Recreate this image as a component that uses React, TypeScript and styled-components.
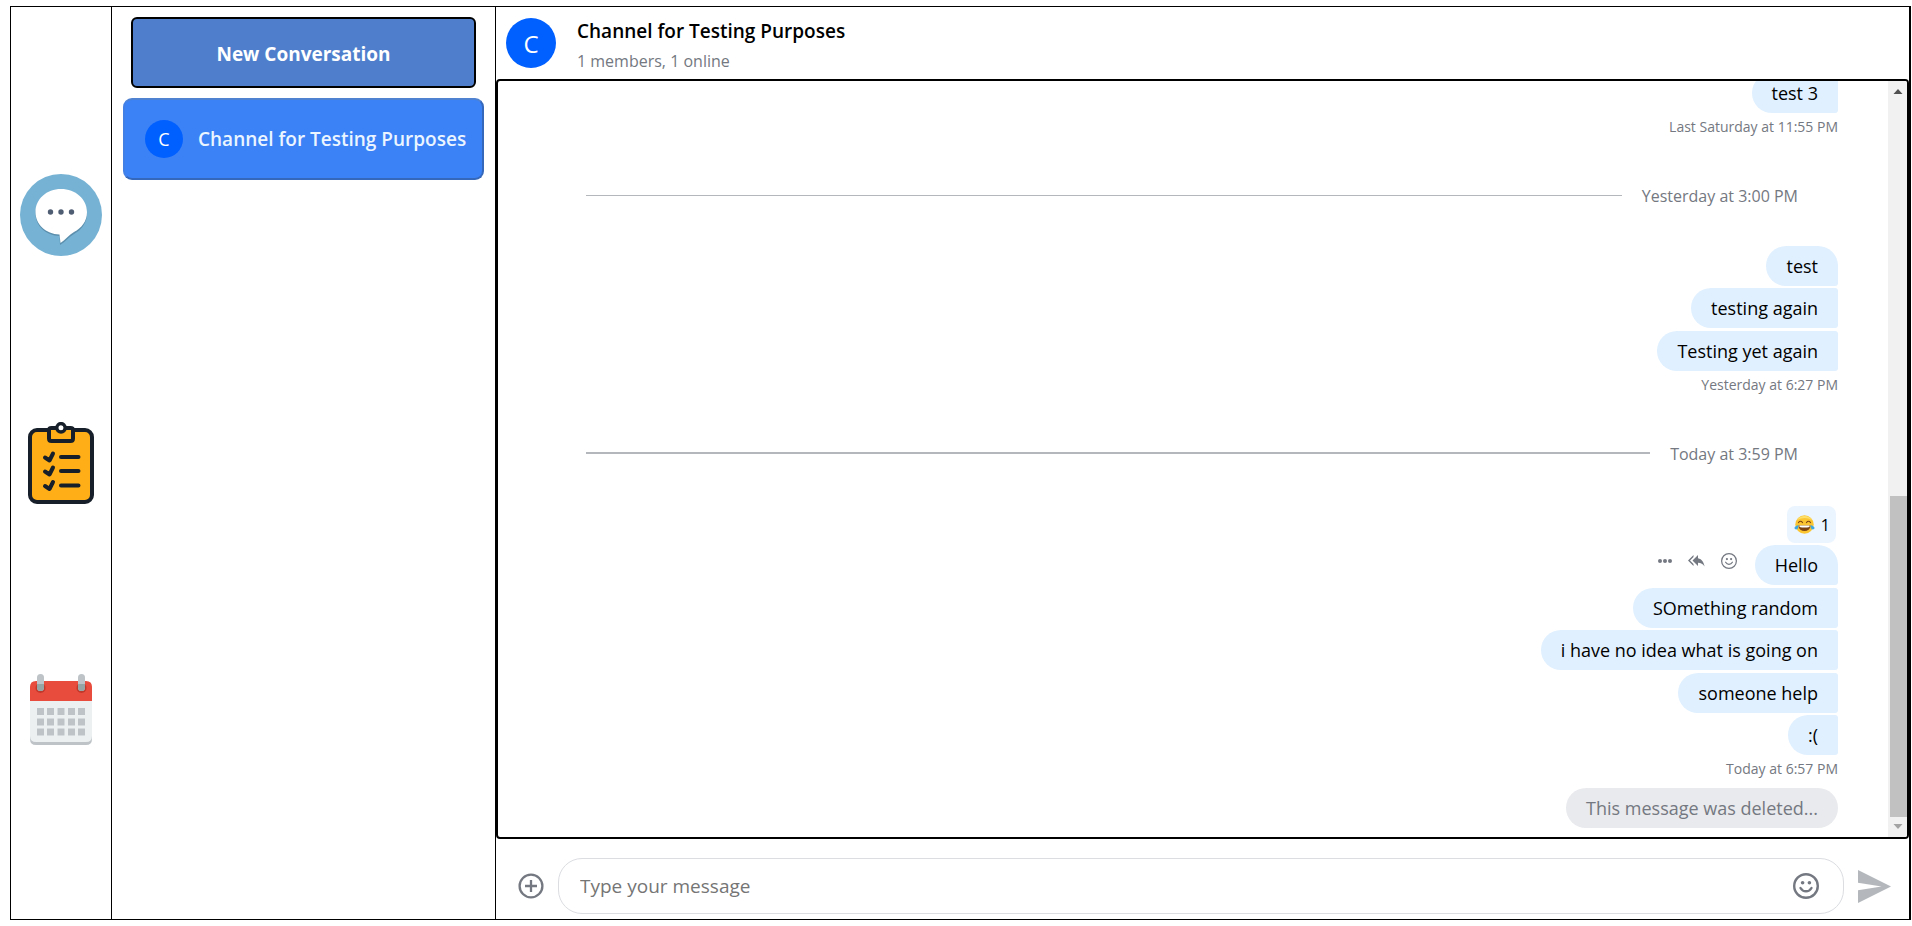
import React from "react";
import styled, { createGlobalStyle } from "styled-components";

const GlobalStyle = createGlobalStyle`
  *, *::before, *::after { box-sizing: border-box; }
  body {
    margin: 0;
    background: #fff;
    color: #000;
    font-family: "Segoe UI", "Open Sans", "Noto Sans", sans-serif;
  }
  button { font: inherit; cursor: pointer; }
`;

const Shell = styled.div`
  display: grid;
  grid-template-columns: 101px 384px minmax(0, 1fr);
  height: calc(100vh - 12px);
  margin: 6px 1px 6px 10px;
  border: 1px solid #000;
  border-right-width: 2px;
`;

const Rail = styled.nav`
  display: flex;
  flex-direction: column;
  align-items: center;
  justify-content: space-evenly;
  border-right: 1px solid #000;
`;

const RailLink = styled.a`
  display: block;
  height: 82px;
`;

const Sidebar = styled.aside`
  display: flex;
  flex-direction: column;
  gap: 10px;
  padding: 10px 11px;
  border-right: 1px solid #000;
`;

const NewConversationButton = styled.button`
  height: 71px;
  margin: 0 8px;
  padding: 2px 0 0;
  border: 2px solid #000;
  border-radius: 6px;
  background: #4f7fcc;
  color: #fff;
  font-size: 19px;
  font-weight: 700;
`;

const ChannelButton = styled.button`
  display: flex;
  align-items: center;
  gap: 15px;
  height: 82px;
  padding: 0 0 0 20px;
  border: 2px solid;
  border-color: #4f82d0 #3568ba #3568ba #4380e6;
  border-radius: 9px;
  background: #3b82f6;
  color: #ebf5ff;
  font-size: 19px;
  font-weight: 600;
  white-space: nowrap;
`;

const Avatar = styled.span<{ $size: number; $text: number }>`
  display: flex;
  flex: none;
  align-items: center;
  justify-content: center;
  width: ${(p) => p.$size}px;
  height: ${(p) => p.$size}px;
  border-radius: 50%;
  background: #005fff;
  color: #fff;
  font-size: ${(p) => p.$text}px;
  font-weight: 400;
`;

const Chat = styled.main`
  display: flex;
  flex-direction: column;
  min-width: 0;
  min-height: 0;
`;

const ChatHeader = styled.header`
  display: flex;
  align-items: center;
  gap: 21px;
  height: 72px;
  padding: 0 10px;
`;

const HeaderText = styled.div`
  padding-top: 6px;
`;

const ChannelTitle = styled.h1`
  margin: 0;
  font-size: 19px;
  line-height: 30px;
  font-weight: 600;
`;

const ChannelInfo = styled.p`
  margin: 0;
  color: #747881;
  font-size: 16px;
  line-height: 30px;
`;

const ListFrame = styled.section`
  display: flex;
  flex: 1;
  min-height: 0;
  border: 2px solid #000;
  border-radius: 4px;
  overflow: hidden;
`;

const MessageList = styled.div`
  display: flex;
  flex: 1;
  flex-direction: column;
  justify-content: flex-end;
  min-width: 0;
  padding: 0 50px 9px 48px;
  overflow: hidden;
`;

const Group = styled.div`
  display: flex;
  flex: none;
  flex-direction: column;
  align-items: flex-end;
  gap: 2px;

  & > div:nth-child(odd):not(:first-child) {
    margin-top: 1px;
  }
`;

const Row = styled.div`
  display: flex;
  align-items: center;
  gap: 18px;
`;

type Shape = "top" | "middle" | "single";
const radii: Record<Shape, string> = {
  top: "20px 20px 3px 20px",
  middle: "20px 3px 3px 20px",
  single: "20px",
};

const Bubble = styled.div<{ $shape: Shape; $deleted?: boolean }>`
  height: 40px;
  padding: 0 20px;
  border-radius: ${(p) => radii[p.$shape]};
  background: ${(p) => (p.$deleted ? "#e9eaed" : "#e0f0ff")};
  color: ${(p) => (p.$deleted ? "#747881" : "#000")};
  font-size: 18px;
  line-height: 40px;
  white-space: nowrap;
`;

const Timestamp = styled.time`
  height: 29px;
  color: #747881;
  font-size: 14px;
  line-height: 24px;
`;

const Separator = styled.div`
  display: flex;
  flex: none;
  align-items: center;
  gap: 20px;
  height: 24px;
  margin: 39px 40px;
  color: #747881;
  font-size: 16px;
  line-height: 24px;
`;

const SeparatorLabel = styled.span`
  padding-top: 2px;
`;

const Rule = styled.hr<{ $weight: number }>`
  flex: 1;
  height: ${(p) => p.$weight}px;
  margin: 0;
  border: 0;
  background: #b4b7bb;
`;

const Reaction = styled.button`
  display: flex;
  align-items: center;
  gap: 6px;
  height: 37px;
  margin: 2px 2px 0 0;
  padding: 0 6px 0 7px;
  border: 0;
  border-radius: 8px;
  background: #ebf5ff;
  color: #000;
  font-size: 16px;
`;

const MessageActions = styled.div`
  display: flex;
  align-items: center;
  gap: 16px;
  padding-bottom: 8px;
`;

const IconButton = styled.button`
  display: flex;
  align-items: center;
  justify-content: center;
  padding: 0;
  border: 0;
  background: none;
  color: #747881;
`;

const ScrollTrack = styled.div`
  display: flex;
  flex: none;
  flex-direction: column;
  align-items: center;
  justify-content: space-between;
  width: 19px;
  background: #f1f1f1;
`;

const ScrollFiller = styled.div`
  flex: 1;
`;

const ScrollThumb = styled.div`
  align-self: flex-end;
  width: 17px;
  height: 42.4%;
  background: #c1c1c1;
`;

const Composer = styled.form`
  display: flex;
  align-items: center;
  gap: 14px;
  padding: 19px 18px 5px 22px;
`;

const InputBox = styled.div`
  display: flex;
  flex: 1;
  align-items: center;
  height: 56px;
  padding: 0 24px 0 21px;
  border: 1px solid #dbdde1;
  border-radius: 24px;
`;

const MessageInput = styled.input`
  flex: 1;
  min-width: 0;
  padding: 0;
  border: 0;
  outline: 0;
  background: none;
  font: inherit;
  font-size: 19px;
  &::placeholder { color: #757575; opacity: 1; }
`;

const ChatIcon = () => (
  <svg width="82" height="82" viewBox="0 0 82 82" aria-hidden="true">
    <circle cx="41" cy="41" r="41" fill="#76b2d4" />
    <path d="M41 17C26.600 17 15.500 26.500 15.500 39.500C15.500 52 26 61.500 39.500 62L40 71C45 68 49 63 54 60C61.500 56 67 49 67 39.500C67 26.500 55.500 17 41 17Z" fill="#5b8fad" />
    <path d="M41 15C26.600 15 15.500 25 15.500 38C15.500 50.500 26 60 39.500 60.500L40.500 69C45 66 49 61 54 58C61.500 54 67 47.500 67 38C67 25 55.500 15 41 15Z" fill="#fff" />
    <circle cx="30.500" cy="38" r="2.700" fill="#4f5d73" />
    <circle cx="41" cy="38" r="2.700" fill="#4f5d73" />
    <circle cx="51.500" cy="38" r="2.700" fill="#4f5d73" />
  </svg>
);

const TasksIcon = () => (
  <svg width="82" height="82" viewBox="0 0 82 82" fill="none" stroke="#17202a" strokeLinecap="round" strokeLinejoin="round" aria-hidden="true">
    <rect x="10" y="8" width="62" height="72" rx="7" fill="#ffae17" strokeWidth="4" />
    <path d="M29 8V16.500Q29 19 31.500 19H50.500Q53 19 53 16.500V8Q53 6 50.500 6H31.500Q29 6 29 8Z" fill="#ffae17" strokeWidth="4" />
    <circle cx="41" cy="5.800" r="4.200" fill="#fff" strokeWidth="3.400" />
    {[35, 49, 63.500].map((y) => (
      <path key={y} d={`M25 ${y + 0.5}L29.500 ${y + 3.5}L33 ${y - 3.5}M41 ${y}H58.500`} strokeWidth="4" />
    ))}
  </svg>
);

const CalendarIcon = () => (
  <svg width="82" height="82" viewBox="0 0 82 82" aria-hidden="true">
    <path d="M10 55H72V68Q72 74 66 74H16Q10 74 10 68Z" fill="#bdc3c7" />
    <path d="M10 25H72V65Q72 71 66 71H16Q10 71 10 65Z" fill="#ecf0f1" />
    <path d="M10 30V16Q10 10 16 10H66Q72 10 72 16V30Z" fill="#e74c3c" />
    {[20.5, 61.500].map((x) => (
      <g key={x}>
        <circle cx={x} cy="17" r="5" fill="#c0392b" />
        <rect x={x - 3.500} y="3" width="7" height="17" rx="3.500" fill="#bdc3c7" />
        <path d={`M${x - 3.5} 13h7v3.500a3.500 3.500 0 0 1-7 0Z`} fill="#95a5a6" />
      </g>
    ))}
    {[37, 47.500, 57.500].map((y) =>
      [17, 27, 37.500, 48, 58].map((x) => (
        <rect key={`${x}-${y}`} x={x} y={y} width="7" height="7" fill="#bdc3c7" />
      ))
    )}
  </svg>
);

const SmileIcon = ({ size, stroke }: { size: number; stroke: number }) => (
  <svg width={size} height={size} viewBox="0 0 26 26" fill="none" aria-hidden="true">
    <circle cx="13" cy="13" r={13 - stroke / 2} stroke="currentColor" strokeWidth={stroke} />
    <circle cx="9.600" cy="9.800" r="1.800" fill="currentColor" />
    <circle cx="16.400" cy="9.800" r="1.800" fill="currentColor" />
    <path d="M7.500 15Q9.500 18.300 13 18.300T18.500 15" stroke="currentColor" strokeWidth={stroke} strokeLinecap="round" />
  </svg>
);

const MoreIcon = () => (
  <svg width="14" height="6" viewBox="0 0 14 6" fill="currentColor" aria-hidden="true">
    <circle cx="2" cy="3" r="2" />
    <circle cx="7" cy="3" r="2" />
    <circle cx="12" cy="3" r="2" />
  </svg>
);

const ReplyIcon = () => (
  <svg width="17" height="12" viewBox="0 0 17 12" fill="currentColor" aria-hidden="true">
    <path d="M5.500 2V0L0 5.500L5.500 11V9L2 5.500ZM10 3.200V0L4.500 5.500L10 11V7.800C13 7.800 15 9 16.500 11.500C16 7.500 14 4 10 3.200Z" />
  </svg>
);

const JoyIcon = () => (
  <svg width="21" height="19" viewBox="0 0 21 19" role="img" aria-label="face with tears of joy">
    <circle cx="10.500" cy="9.500" r="9.200" fill="#fbc531" />
    <path d="M3 5a9 9 0 0 1 15 0q-7-4-15 0Z" fill="#fde06a" />
    <path d="M4.500 10.500h12a6 5.600 0 0 1-12 0Z" fill="#7d4411" />
    <path d="M5.500 10.500h10v1.500q-5 1-10 0Z" fill="#fff" />
    <path d="M4.500 7.500q2-2.500 4 0M12.500 7.500q2-2.500 4 0" fill="none" stroke="#7d4411" strokeWidth="1.200" strokeLinecap="round" />
    <path d="M4.500 10Q4.500 14.500 2 14.500Q0 14 .500 12.500Q1.500 10.500 4.500 10ZM16.500 10Q16.500 14.500 19 14.500Q21 14 20.500 12.500Q19.500 10.500 16.500 10Z" fill="#3fa7e0" />
  </svg>
);

const AttachIcon = () => (
  <svg width="26" height="26" viewBox="0 0 26 26" fill="none" stroke="currentColor" strokeWidth="2.300" aria-hidden="true">
    <circle cx="13" cy="13" r="11.400" />
    <path d="M13 7V19M7 13H19" />
  </svg>
);

const SendIcon = () => (
  <svg width="33" height="33" viewBox="0 0 33 33" fill="#b4b7bb" aria-hidden="true">
    <path d="M0 0L33 16.500L0 33V20.200L23.500 16.500L0 12.800Z" />
  </svg>
);

const ScrollArrow = ({ down = false }: { down?: boolean }) => (
  <svg width="19" height="20" viewBox="0 0 19 20" aria-hidden="true">
    {down ? <path d="M5.500 7H14.500L10 12Z" fill="#a3a3a3" /> : <path d="M5.500 13H14.500L10 8Z" fill="#505050" />}
  </svg>
);

const DateSeparator = ({ label, weight }: { label: string; weight: number }) => (
  <Separator>
    <Rule $weight={weight} />
    <SeparatorLabel>{label}</SeparatorLabel>
  </Separator>
);

export default function App() {
  return (
    <>
      <GlobalStyle />
      <Shell>
        <Rail>
          <RailLink href="#chat" aria-label="Chat"><ChatIcon /></RailLink>
          <RailLink href="#tasks" aria-label="Tasks"><TasksIcon /></RailLink>
          <RailLink href="#calendar" aria-label="Calendar"><CalendarIcon /></RailLink>
        </Rail>
        <Sidebar>
          <NewConversationButton type="button">New Conversation</NewConversationButton>
          <ChannelButton type="button">
            <Avatar $size={38} $text={18}>C</Avatar>
            <span>Channel for Testing Purposes</span>
          </ChannelButton>
        </Sidebar>
        <Chat>
          <ChatHeader>
            <Avatar $size={50} $text={24}>C</Avatar>
            <HeaderText>
              <ChannelTitle>Channel for Testing Purposes</ChannelTitle>
              <ChannelInfo>1 members, 1 online</ChannelInfo>
            </HeaderText>
          </ChatHeader>
          <ListFrame>
            <MessageList>
              <Group>
                <Bubble $shape="middle">test 3</Bubble>
                <Timestamp>Last Saturday at 11:55 PM</Timestamp>
              </Group>
              <DateSeparator label="Yesterday at 3:00 PM" weight={1} />
              <Group>
                <Bubble $shape="top">test</Bubble>
                <Bubble $shape="middle">testing again</Bubble>
                <Bubble $shape="middle">Testing yet again</Bubble>
                <Timestamp>Yesterday at 6:27 PM</Timestamp>
              </Group>
              <DateSeparator label="Today at 3:59 PM" weight={2} />
              <Group>
                <Reaction type="button"><JoyIcon /><span>1</span></Reaction>
                <Row>
                  <MessageActions>
                    <IconButton type="button" aria-label="Message options"><MoreIcon /></IconButton>
                    <IconButton type="button" aria-label="Reply"><ReplyIcon /></IconButton>
                    <IconButton type="button" aria-label="Add reaction"><SmileIcon size={16} stroke={2} /></IconButton>
                  </MessageActions>
                  <Bubble $shape="top">Hello</Bubble>
                </Row>
                <Bubble $shape="middle">SOmething random</Bubble>
                <Bubble $shape="middle">i have no idea what is going on</Bubble>
                <Bubble $shape="middle">someone help</Bubble>
                <Bubble $shape="middle">:(</Bubble>
                <Timestamp>Today at 6:57 PM</Timestamp>
                <Bubble $shape="single" $deleted>This message was deleted...</Bubble>
              </Group>
            </MessageList>
            <ScrollTrack>
              <ScrollArrow />
              <ScrollFiller />
              <ScrollThumb />
              <ScrollArrow down />
            </ScrollTrack>
          </ListFrame>
          <Composer>
            <IconButton type="button" aria-label="Attach files"><AttachIcon /></IconButton>
            <InputBox>
              <MessageInput type="text" placeholder="Type your message" aria-label="Type your message" />
              <IconButton type="button" aria-label="Emoji picker"><SmileIcon size={26} stroke={2.4} /></IconButton>
            </InputBox>
            <IconButton type="submit" aria-label="Send"><SendIcon /></IconButton>
          </Composer>
        </Chat>
      </Shell>
    </>
  );
}
